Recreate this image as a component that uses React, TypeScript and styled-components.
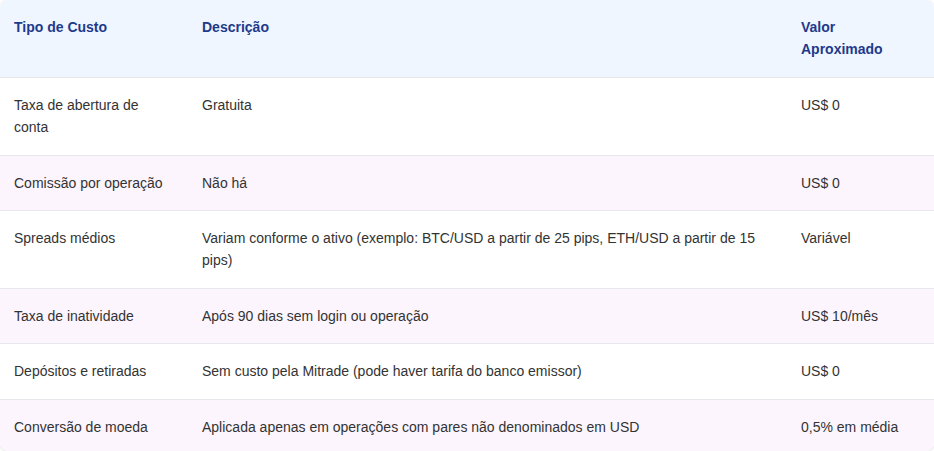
import styled, { createGlobalStyle } from 'styled-components';

const GlobalStyle = createGlobalStyle`
  html, body {
    margin: 0;
    padding: 0;
    background: #ffffff;
  }
  body {
    font-family: 'Liberation Sans', Arial, sans-serif;
  }
`;

const Wrapper = styled.div`
  width: 934px;
  height: 451px;
  border-radius: 8px;
  overflow: hidden;
  box-shadow: 0 0 0 1px rgba(0, 0, 0, 0.03), 0 1px 3px rgba(0, 0, 0, 0.08);
  background: #ffffff;
`;

const Table = styled.table`
  width: 100%;
  border-collapse: collapse;
  table-layout: fixed;
  font-size: 14px;
  line-height: 1.6;
  color: #333333;
`;

const HeadCell = styled.th`
  background: #eff6ff;
  color: #1e3a8a;
  font-weight: 700;
  text-align: left;
  vertical-align: top;
  padding: 16px 14px;
  border-bottom: 1px solid #e5e7eb;
`;

const Row = styled.tr<{ $alt: boolean }>`
  background: ${({ $alt }) => ($alt ? '#fcf5fd' : '#ffffff')};
  border-bottom: 1px solid #e8e8ec;

  &:last-child {
    border-bottom: none;
  }
`;

const Cell = styled.td`
  vertical-align: top;
  padding: 16px 14px;
`;

const rows = [
  ['Taxa de abertura de conta', 'Gratuita', 'US$ 0'],
  ['Comissão por operação', 'Não há', 'US$ 0'],
  [
    'Spreads médios',
    'Variam conforme o ativo (exemplo: BTC/USD a partir de 25 pips, ETH/USD a partir de 15 pips)',
    'Variável',
  ],
  ['Taxa de inatividade', 'Após 90 dias sem login ou operação', 'US$ 10/mês'],
  ['Depósitos e retiradas', 'Sem custo pela Mitrade (pode haver tarifa do banco emissor)', 'US$ 0'],
  ['Conversão de moeda', 'Aplicada apenas em operações com pares não denominados em USD', '0,5% em média'],
];

export default function App() {
  return (
    <>
      <GlobalStyle />
      <Wrapper>
        <Table>
          <colgroup>
            <col style={{ width: 188 }} />
            <col style={{ width: 599 }} />
            <col style={{ width: 147 }} />
          </colgroup>
          <thead>
            <tr>
              <HeadCell>Tipo de Custo</HeadCell>
              <HeadCell>Descrição</HeadCell>
              <HeadCell>Valor Aproximado</HeadCell>
            </tr>
          </thead>
          <tbody>
            {rows.map((r, i) => (
              <Row key={i} $alt={i % 2 === 1}>
                <Cell>{r[0]}</Cell>
                <Cell>{r[1]}</Cell>
                <Cell>{r[2]}</Cell>
              </Row>
            ))}
          </tbody>
        </Table>
      </Wrapper>
    </>
  );
}
